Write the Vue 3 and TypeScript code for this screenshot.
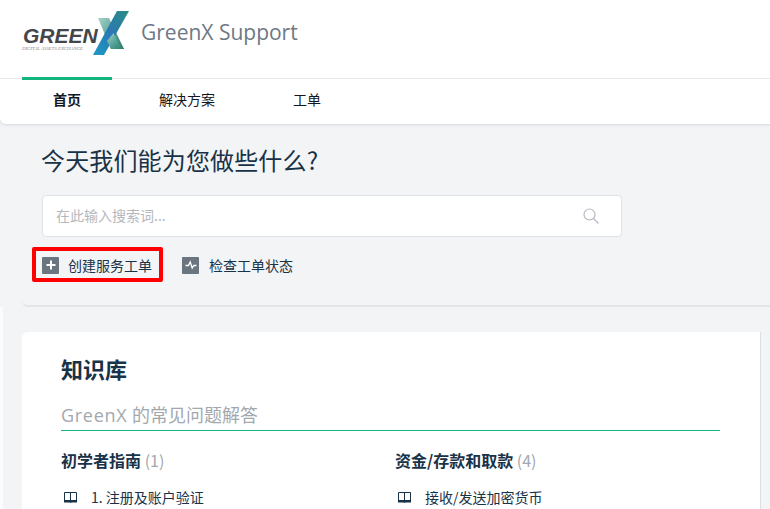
<script setup lang="ts">
interface Article {
  id: number;
  title: string;
}

interface Category {
  id: number;
  name: string;
  count: number;
  articles: Article[];
}

const tabs = ['首页', '解决方案', '工单'];

const categories: Category[] = [
  { id: 1, name: '初学者指南', count: 1, articles: [{ id: 1, title: '1. 注册及账户验证' }] },
  { id: 2, name: '资金/存款和取款', count: 4, articles: [{ id: 2, title: '接收/发送加密货币' }] },
];
</script>

<template>
  <div class="page">
    <header class="header">
      <div class="brand">
        <div class="logo">
          <div class="logo-words">
            <span class="logo-name">GREEN</span>
            <span class="logo-sub">DIGITAL ASSETS EXCHANGE</span>
          </div>
          <svg class="logo-x" width="37" height="44" viewBox="0 0 37 44">
            <defs>
              <linearGradient id="xa" x1="0" y1="1" x2="1" y2="0">
                <stop offset="0" stop-color="#1c9cc4" />
                <stop offset="0.5" stop-color="#2a78b4" />
                <stop offset="1" stop-color="#2b8d80" />
              </linearGradient>
              <linearGradient id="xb" x1="0" y1="0" x2="1" y2="1">
                <stop offset="0" stop-color="#a9d2c8" />
                <stop offset="0.55" stop-color="#4f9f95" />
                <stop offset="1" stop-color="#2c7d66" />
              </linearGradient>
            </defs>
            <polygon points="6,7 17,7 32,38 19,38" fill="url(#xb)" />
            <polygon points="25,0 37,0 12,44 1,44" fill="url(#xa)" />
            <polygon points="21.5,22 27,33 32,38 19,38 15,30" fill="url(#xb)" />
          </svg>
        </div>
        <span class="site-name">GreenX Support</span>
      </div>
      <nav class="tabs">
        <a v-for="(tab, i) in tabs" :key="tab" class="tab" :class="{ active: i === 0 }">{{ tab }}</a>
      </nav>
    </header>

    <section class="hero">
      <h1>今天我们能为您做些什么?</h1>
      <div class="search">
        <span class="placeholder">在此输入搜索词...</span>
        <svg width="16" height="16" viewBox="0 0 16 16" fill="none" stroke="#b4b9c0" stroke-width="1.2">
          <circle cx="6.5" cy="6.5" r="5.5" />
          <path d="M10.5 10.5l5 5" />
        </svg>
      </div>
      <div class="actions">
        <a class="action highlighted">
          <span class="action-icon">
            <svg width="16" height="16" viewBox="0 0 16 16"><path d="M8 3.5v9M3.5 8h9" stroke="#fff" stroke-width="2" /></svg>
          </span>
          创建服务工单
        </a>
        <a class="action second">
          <span class="action-icon">
            <svg width="16" height="16" viewBox="0 0 16 16" fill="none"><path d="M2.5 8.5h3l1.7-3.5 2 6 1.6-2.5h2.7" stroke="#fff" stroke-width="1.3" /></svg>
          </span>
          检查工单状态
        </a>
      </div>
    </section>

    <main class="content">
      <div class="card">
        <h2>知识库</h2>
        <h3 class="subtitle"><span class="subtitle-brand">GreenX</span> 的常见问题解答</h3>
        <div class="columns">
          <div v-for="cat in categories" :key="cat.id" class="column">
            <h4>{{ cat.name }} <span class="count">({{ cat.count }})</span></h4>
            <a v-for="art in cat.articles" :key="art.id" class="article">
              <svg width="13" height="11" viewBox="0 0 13 11" fill="none">
                <path d="M0.5 0.5h12v8h-12zM6.5 0.5v8" stroke="#183247" stroke-width="1" />
                <path d="M0 8h13v2.5H7.5l-1 .5-1-.5H0z" fill="#183247" />
              </svg>
              <span>{{ art.title }}</span>
            </a>
          </div>
        </div>
      </div>
    </main>
  </div>
</template>

<style>
html,
body {
  margin: 0;
  background: #f3f4f6;
  overflow: hidden;
}
</style>

<style scoped>
.page {
  width: 770px;
  height: 509px;
  overflow: hidden;
  font-family: "Noto Sans CJK SC", "Noto Sans", sans-serif;
  color: #183247;
}

.header {
  background: #fff;
  box-shadow: 0 1px 3px rgba(24, 50, 71, 0.15);
  border-bottom-left-radius: 6px;
}

.brand {
  display: flex;
  align-items: flex-start;
  height: 78px;
  padding: 11px 0 0 22px;
  box-sizing: border-box;
}

.logo {
  display: flex;
  width: 107px;
  height: 44px;
  margin-right: 12px;
}

.logo-words {
  display: flex;
  flex-direction: column;
  width: 70px;
  padding-top: 15px;
}

.logo-name {
  font-family: "Liberation Sans", sans-serif;
  font-style: italic;
  font-weight: 700;
  font-size: 21px;
  line-height: 20px;
  color: #45464a;
  padding-left: 1px;
  white-space: nowrap;
}

.logo-sub {
  font-family: "Liberation Serif", serif;
  font-style: italic;
  font-size: 4.8px;
  line-height: 6px;
  color: #85878b;
  white-space: nowrap;
}

.logo-x {
  flex-shrink: 0;
}

.site-name {
  font-family: "Open Sans", sans-serif;
  font-size: 21px;
  line-height: 42px;
  color: #6d7884;
}

.tabs {
  display: flex;
  gap: 30px;
  height: 45px;
  padding-left: 22px;
  border-top: 1px solid #e6e8eb;
}

.tab {
  width: 90px;
  height: 46px;
  margin-top: -2px;
  box-sizing: border-box;
  text-align: center;
  font-size: 14px;
  line-height: 38px;
  color: #12181f;
  border-top: 3px solid transparent;
}

.tab.active {
  font-weight: 700;
  border-top-color: #12b57f;
}

.hero {
  margin-left: 22px;
  height: 183px;
  padding: 19px 0 0 19px;
  box-sizing: border-box;
  border-bottom: 2px solid #e3e5e8;
  border-bottom-left-radius: 6px;
}

h1 {
  margin: 0;
  font-size: 24px;
  line-height: 34px;
  font-weight: 400;
  letter-spacing: 0.15px;
  color: #183247;
}

.search {
  display: flex;
  align-items: center;
  justify-content: space-between;
  width: 580px;
  height: 42px;
  margin-top: 18px;
  margin-left: 1px;
  padding: 0 22px 0 13px;
  box-sizing: border-box;
  background: #fff;
  border: 1px solid #dfe2e6;
  border-radius: 4px;
}

.placeholder {
  font-size: 14px;
  line-height: 18px;
  padding-bottom: 2px;
  color: #b4b8bd;
}

.actions {
  display: flex;
  align-items: center;
  gap: 19px;
  margin-top: 10px;
  margin-left: -9px;
}

.action {
  display: flex;
  align-items: center;
  gap: 9px;
  height: 35px;
  box-sizing: border-box;
  font-size: 14px;
  padding-top: 1px;
  color: #183247;
}

.action.second {
  gap: 10px;
}

.action.highlighted {
  padding: 1px 7px 0 6px;
  border: 4px solid #fe0000;
  border-radius: 2px;
}

.action-icon {
  display: flex;
  width: 17px;
  height: 17px;
  align-items: center;
  justify-content: center;
  background: #6b7580;
  border-radius: 1px;
}

.content {
  padding: 25px 9px 0 22px;
  background: linear-gradient(to right, #fafbfc 3px, transparent 3px);
}

.card {
  height: 300px;
  padding: 19px 40px 0 39px;
  box-sizing: border-box;
  background: #fff;
  border-top-left-radius: 6px;
  border-right: 1px solid #dcdfe3;
}

h2 {
  margin: 0;
  font-size: 22px;
  line-height: 34px;
  font-weight: 700;
  color: #183247;
}

.subtitle {
  margin: 17px 0 0;
  padding-bottom: 2px;
  font-family: "Open Sans", "Noto Sans CJK SC", sans-serif;
  font-size: 18px;
  line-height: 26px;
  font-weight: 400;
  color: #a3a8ae;
  border-bottom: 1px solid #12b57f;
}

.subtitle-brand {
  letter-spacing: 0.7px;
}

.columns {
  display: grid;
  grid-template-columns: 334px 1fr;
  margin-top: 17px;
}

h4 {
  margin: 0;
  font-size: 16px;
  line-height: 24px;
  font-weight: 700;
  color: #183247;
}

.count {
  font-weight: 400;
  font-size: 16px;
  color: #a3a8ae;
}

.article {
  display: flex;
  align-items: center;
  gap: 14px;
  margin-top: 15px;
  padding-left: 3px;
  font-size: 14px;
  line-height: 20px;
  color: #183247;
}
</style>
